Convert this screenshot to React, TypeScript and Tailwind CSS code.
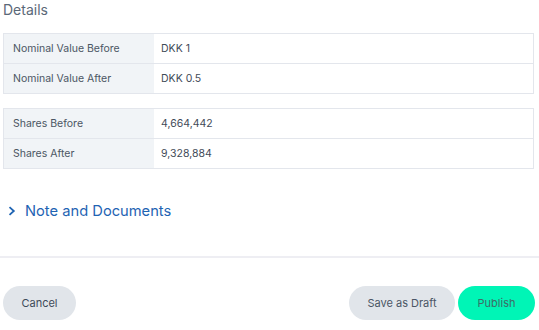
import React from "react";

const Row = ({ label, value, last }: { label: string; value: string; last?: boolean }) => (
  <div className={`flex ${last ? "h-[29px]" : "h-[30px] border-b border-[#e3e6ec]"}`}>
    <div className="w-[150px] bg-[#f1f4f7] pl-[9px] flex items-center text-[10.5px] text-[#4b5663]">{label}</div>
    <div className="flex-1 bg-white pl-[7px] flex items-center text-[10.5px] text-[#3f4a57]">{value}</div>
  </div>
);

export default function App() {
  return (
    <div className="w-[539px] h-[330px] bg-white overflow-hidden" style={{ fontFamily: "Inter, 'Noto Sans', sans-serif" }}>
      <div className="pl-[3px] pr-[5px]">
        <div className="h-[33px] pt-[1px] text-[14px] text-[#5a6878] leading-[18px]">Details</div>
        <div className="border border-[#e3e6ec]">
          <Row label="Nominal Value Before" value="DKK 1" />
          <Row label="Nominal Value After" value="DKK 0.5" last />
        </div>
        <div className="mt-[14px] border border-[#e3e6ec]">
          <Row label="Shares Before" value="4,664,442" />
          <Row label="Shares After" value="9,328,884" last />
        </div>
        <div className="mt-[32px] flex items-center h-[20px] text-[#1f64b3]">
          <svg width="8" height="10" viewBox="0 0 8 10" className="ml-[5px]">
            <path d="M1.5 1.2 L5.8 5 L1.5 8.8" fill="none" stroke="#1f64b3" strokeWidth="1.8" />
          </svg>
          <span className="ml-[9px] text-[14.7px] leading-[20px]">Note and Documents</span>
        </div>
      </div>
      <div className="mt-[35px] h-[2px] bg-[#eeeef3]" />
      <div className="mt-[28px] pl-[3px] pr-[4px] flex items-center">
        <button className="h-[34px] w-[73px] rounded-full bg-[#e1e5ea] text-[11px] text-[#3e4a59]">Cancel</button>
        <div className="flex-1" />
        <button className="h-[34px] w-[106px] rounded-full bg-[#e1e5ea] text-[11px] text-[#4a5665]">Save as Draft</button>
        <button className="ml-[3px] h-[34px] w-[77px] rounded-full bg-[#00f5b6] text-[11px] text-[#3f6b67]">Publish</button>
      </div>
    </div>
  );
}
